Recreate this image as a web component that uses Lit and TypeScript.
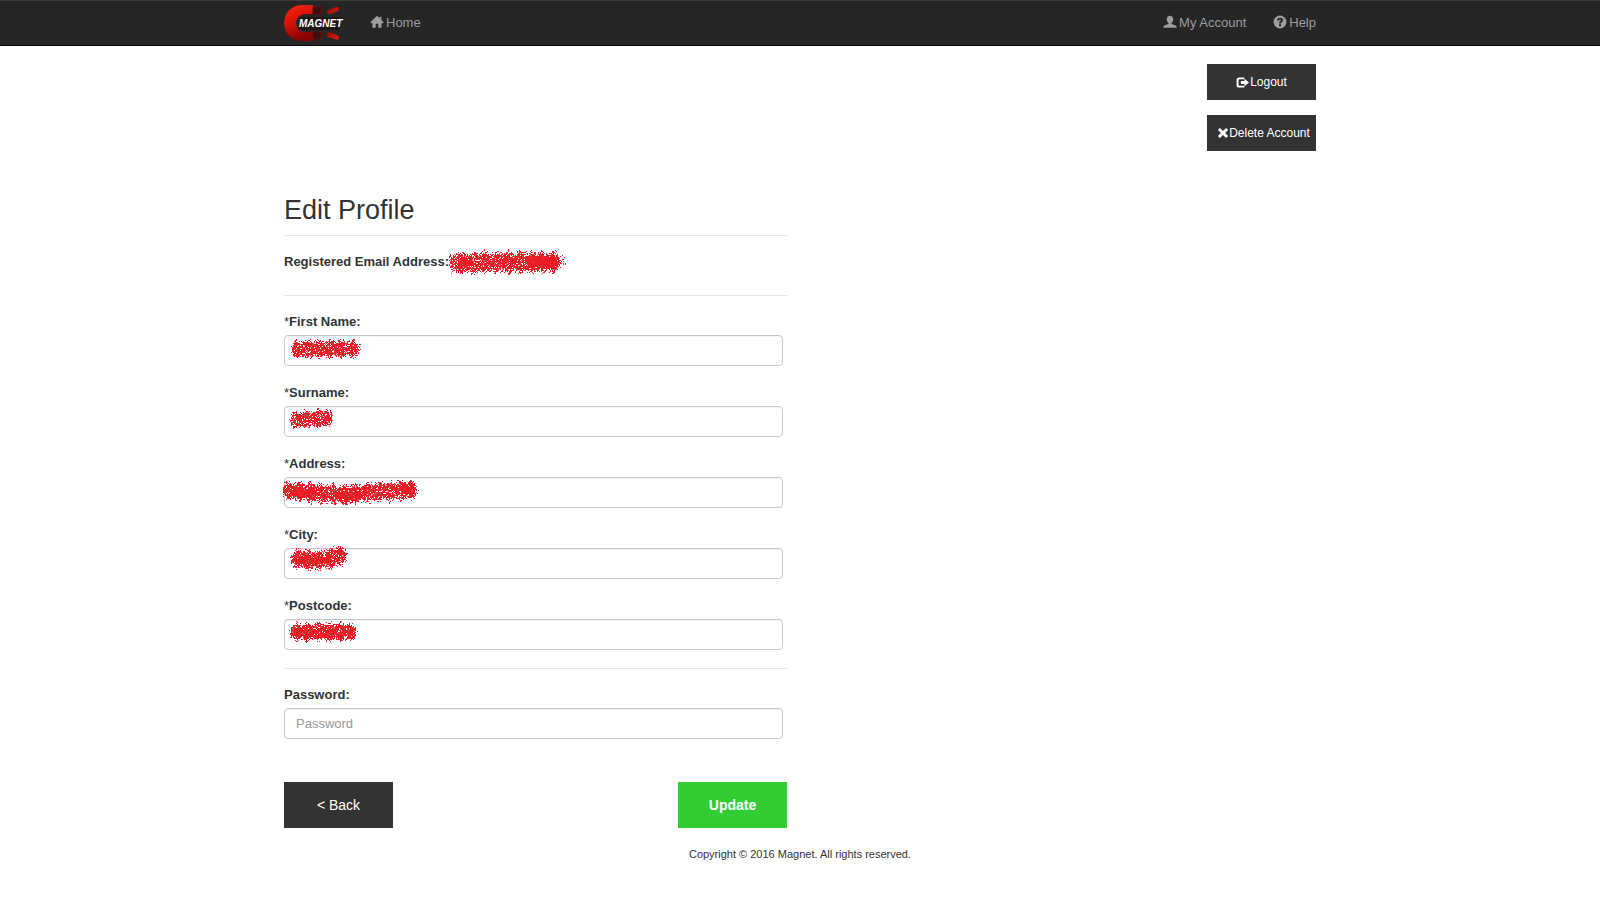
import { LitElement, html, css, svg } from "lit";
import { customElement, property } from "lit/decorators.js";

type Stroke = { points: [number, number][]; radius: number; density: number };

function randomSource(seed: number) {
  let s = seed;
  return () => {
    s = (s * 1664525 + 1013904223) >>> 0;
    return s / 4294967296;
  };
}

function segmentDistance(px: number, py: number, a: [number, number], b: [number, number]) {
  const dx = b[0] - a[0];
  const dy = b[1] - a[1];
  const len = dx * dx + dy * dy || 1;
  const t = Math.max(0, Math.min(1, ((px - a[0]) * dx + (py - a[1]) * dy) / len));
  return Math.hypot(px - a[0] - t * dx, py - a[1] - t * dy);
}

// A spray-brush mark that hides a private value.
@customElement("spray-mark")
export class SprayMark extends LitElement {
  @property({ attribute: false }) strokes: Stroke[] = [];
  @property({ type: Number }) width = 80;
  @property({ type: Number }) height = 24;
  @property({ type: Number }) seed = 1;

  static styles = css`
    :host { display: block; pointer-events: none; }
    svg { display: block; }
  `;

  render() {
    const rnd = randomSource(this.seed);
    let red = "";
    let grey = "";
    for (let y = 0; y < this.height; y++) {
      for (let x = 0; x < this.width; x++) {
        let p = 0;
        for (const s of this.strokes) {
          const radius = s.radius + 1.2 * Math.sin(x * 0.55 + this.seed) + 0.8 * Math.sin(x * 1.3 + y);
          for (let i = 0; i < s.points.length - 1; i++) {
            const d = segmentDistance(x + 0.5, y + 0.5, s.points[i], s.points[i + 1]) / radius;
            const q = d < 0.6 ? s.density : d < 1.05 ? s.density * (1 - (d - 0.6) / 0.5) : 0;
            p = Math.max(p, q);
          }
        }
        const r = rnd();
        if (r < p) red += `M${x} ${y}h1v1h-1z`;
        else if (p > 0.6 && r < p + 0.08) grey += `M${x} ${y}h1v1h-1z`;
      }
    }
    return html`<svg width=${this.width} height=${this.height} shape-rendering="crispEdges" aria-hidden="true">
      <path d=${red} fill="#ed1c24"></path>
      <path d=${grey} fill="#b0686b"></path>
    </svg>`;
  }
}

const homeIcon = svg`<path d="M8 .8.4 8.400l.9.9h1.500v5.300h3.700V10h3v4.600h3.700V9.300h1.500l.9-.9L13 5.800V2h-2v1.800z"/>`;
const userIcon = svg`<path d="M8 .8c-2.200 0-3.700 1.600-3.700 4 0 1.800.8 3.300 1.900 4.200.3.300.2 1.100-.3 1.300L1.700 12C.9 12.300.5 12.900.5 13.700v.9h15v-.9c0-.8-.4-1.400-1.200-1.700l-4.200-1.700c-.5-.2-.6-1-.3-1.300 1.100-.9 1.900-2.400 1.900-4.200 0-2.400-1.500-4-3.700-4z"/>`;
const helpIcon = svg`<path fill-rule="evenodd" d="M8 .6a7.400 7.400 0 1 0 0 14.800A7.400 7.400 0 0 0 8 .6zM6.900 10.700h2.300v2.200H6.900zM8.100 3.100c2 0 3.400 1 3.400 2.700 0 1.300-.7 1.900-1.400 2.400-.6.400-.9.700-.9 1.500H6.900c0-1.500.6-2.100 1.300-2.600.5-.4.900-.6.900-1.200 0-.5-.4-.8-1-.8-.8 0-1.200.5-1.200 1.200H4.600c.1-2 1.500-3.200 3.500-3.200z"/>`;
const logoutIcon = svg`<path d="M10.300 1.700H4A3.300 3.300 0 0 0 .7 5v6A3.300 3.300 0 0 0 4 14.300h6.300V12H4.400a1.300 1.300 0 0 1-1.300-1.300V5.300A1.300 1.300 0 0 1 4.400 4h5.900z"/><path d="M10.400 3.300v3H6v3.400h4.400v3L16 8z"/>`;
const removeIcon = svg`<path d="M3.900 1.200 8 5.200l4.100-4 2.700 2.700L10.800 8l4 4.100-2.700 2.700L8 10.800l-4.100 4-2.700-2.700L5.200 8l-4-4.100z"/>`;

const icon = (shape: unknown) =>
  html`<svg class="icon" viewBox="0 0 16 16" aria-hidden="true">${shape}</svg>`;

const logo = html`<svg class="logo" width="60" height="38" viewBox="0 0 60 38" role="img" aria-label="Magnet">
  <defs>
    <linearGradient id="body" x1="0" y1="0" x2="0.4" y2="1">
      <stop offset="0" stop-color="#f82c12"></stop>
      <stop offset=".45" stop-color="#dc1408"></stop>
      <stop offset="1" stop-color="#860403"></stop>
    </linearGradient>
    <linearGradient id="tip" x1="0" y1="0" x2="1" y2="1">
      <stop offset="0" stop-color="#8e0a05"></stop>
      <stop offset="1" stop-color="#e0200f"></stop>
    </linearGradient>
  </defs>
  <path d="M29 1H18a18 18 0 0 0 0 36h11v-9H21a9 9 0 0 1 0-18h8z" fill="url(#body)"></path>
  <path d="M29 3h8v7h-8zM29 28h8v7h-8z" fill="#3a1110" stroke="#6b0c0a"></path>
  <path d="M43 6.500 52 3q3-.5 3 1.500T53 7.500L46 10q-3 .5-3-3.500z" fill="url(#tip)"></path>
  <path d="M43 30q0-3 3-2l7 3q2 1 2 3t-3 1.500L44 33q-1-.5-1-3z" fill="url(#tip)"></path>
  <path d="M17 13h41l-3 13H14z" fill="#1c1010" opacity=".7"></path>
  <text x="15" y="23" class="logo-text">MAGNET</text>
</svg>`;

const line = (x1: number, y1: number, x2: number, y2: number, radius: number, density = 0.82): Stroke => ({
  points: [[x1, y1], [x2, y2]], radius, density,
});

const fields = [
  { id: "first", label: "First Name:", name: "given-name", mark: { x: 6, y: 4, w: 74, h: 20, strokes: [line(9, 10, 63, 10, 9, 0.8)] } },
  { id: "surname", label: "Surname:", name: "family-name", mark: { x: 4, y: 2, w: 48, h: 21, strokes: [line(9, 12, 37, 10, 9, 0.76)] } },
  { id: "address", label: "Address:", name: "street-address", mark: { x: -4, y: 3, w: 142, h: 25, strokes: [
    { points: [[11, 11], [65, 15], [95, 12], [129, 10]], radius: 10, density: 0.78 } as Stroke, line(15, 12, 34, 12, 6, 0.95), line(58, 15, 80, 15, 5, 0.9), line(125, 10, 131, 10, 6, 0.93)] } },
  { id: "city", label: "City:", name: "address-level2", mark: { x: 4, y: -2, w: 62, h: 26, strokes: [
    { points: [[11, 13], [20, 14], [38, 14], [50, 10]], radius: 10, density: 0.8 } as Stroke, line(12, 15, 40, 14, 5, 0.96)] } },
  { id: "postcode", label: "Postcode:", name: "postal-code", mark: { x: 2, y: 2, w: 76, h: 22, strokes: [line(11, 11, 63, 11, 9, 0.84), line(12, 12, 26, 12, 5, 0.94)] } },
];

@customElement("app-root")
export class AppRoot extends LitElement {
  static styles = css`
    :host {
      display: block;
      min-height: 100vh;
      background: #fff;
      color: #333;
      font: 13px/18px "Liberation Sans", Arial, sans-serif;
    }
    * { box-sizing: border-box; }
    .container { max-width: 1064px; margin: 0 auto; padding: 0 16px; }
    .navbar { background: #262626; border-top: 1px solid #3a3a3a; border-bottom: 1px solid #080808; }
    .nav { display: flex; align-items: center; height: 44px; }
    .brand { display: block; }
    .logo { display: block; overflow: visible; }
    .logo-text { font: italic bold 10px "Liberation Sans", Arial, sans-serif; fill: #fff; }
    .nav a { color: #9d9d9d; text-decoration: none; }
    .link { display: flex; align-items: center; gap: 2px; }
    .home { margin-left: 26px; }
    .account { margin-left: auto; }
    .help { margin-left: 27px; }
    .icon { width: 14px; height: 14px; fill: currentColor; flex: none; }
    .link .icon { margin-bottom: 3px; }
    .actions { display: flex; flex-direction: column; align-items: flex-end; gap: 15px; padding-top: 18px; }
    button {
      width: 109px;
      border: 0;
      padding: 0;
      color: #fff;
      background: #333;
      font: 12px/18px "Liberation Sans", Arial, sans-serif;
      cursor: pointer;
    }
    .small {
      height: 36px;
      display: flex;
      align-items: center;
      justify-content: center;
      gap: 1px;
      white-space: nowrap;
    }
    .delete { padding-left: 4px; gap: 0; }
    .small .icon { width: 13px; height: 13px; }
    .delete .icon { width: 12px; height: 12px; }
    .profile { max-width: 503px; margin-top: 44px; }
    h1 { font-size: 27px; line-height: 30px; font-weight: 400; margin: 0 0 10px; }
    hr { border: 0; border-top: 1px solid #e5e5e5; margin: 0 0 17px; }
    .email { display: flex; align-items: center; height: 18px; margin-bottom: 24px; font-weight: 700; }
    .fields { display: grid; gap: 18px; margin-bottom: 18px; }
    .field { display: grid; gap: 4px; padding-right: 4px; }
    label { font-weight: 700; }
    .star { font-weight: 400; }
    .box { position: relative; }
    .mark { position: absolute; }
    input {
      display: block;
      width: 100%;
      height: 31px;
      padding: 0 11px;
      border: 1px solid #c8c8c8;
      border-radius: 4px;
      background: #fff;
      color: #555;
      font: inherit;
      box-shadow: inset 0 1px 1px rgba(0, 0, 0, 0.05);
    }
    input::placeholder { color: #999; opacity: 1; }
    .submit { display: flex; justify-content: space-between; margin-top: 43px; }
    .submit button { height: 46px; font-size: 14px; }
    .submit .update { background: #3c3; font-weight: 700; }
    .footer { padding-top: 17px; text-align: center; font-size: 11px; }
  `;

  render() {
    return html`
      <header class="navbar">
        <nav class="container nav">
          <a class="brand" href="#">${logo}</a>
          <a class="link home" href="#home">${icon(homeIcon)}<span>Home</span></a>
          <a class="link account" href="#account">${icon(userIcon)}<span>My Account</span></a>
          <a class="link help" href="#help">${icon(helpIcon)}<span>Help</span></a>
        </nav>
      </header>
      <main class="container">
        <div class="actions">
          <button class="small" type="button">${icon(logoutIcon)}<span>Logout</span></button>
          <button class="small delete" type="button">${icon(removeIcon)}<span>Delete Account</span></button>
        </div>
        <form class="profile" @submit=${(e: Event) => e.preventDefault()}>
          <h1>Edit Profile</h1>
          <hr />
          <div class="email">
            <span>Registered Email Address:</span>
            <spray-mark .width=${118} .height=${26} .seed=${7}
              .strokes=${[line(10, 14, 104, 13, 11, 0.76), line(82, 12, 102, 13, 8, 0.99), line(12, 14, 20, 14, 6, 0.9)]}></spray-mark>
          </div>
          <hr />
          <div class="fields">
            ${fields.map((f, i) => html`
              <div class="field">
                <label for=${f.id}><span class="star">*</span>${f.label}</label>
                <div class="box">
                  <input id=${f.id} type="text" autocomplete=${f.name} />
                  <spray-mark class="mark" style="left:${f.mark.x}px;top:${f.mark.y}px"
                    .width=${f.mark.w} .height=${f.mark.h} .seed=${i * 31 + 11} .strokes=${f.mark.strokes}></spray-mark>
                </div>
              </div>`)}
          </div>
          <hr />
          <div class="field">
            <label for="password">Password:</label>
            <input id="password" type="password" placeholder="Password" autocomplete="current-password" />
          </div>
          <div class="submit">
            <button type="button">&lt; Back</button>
            <button class="update" type="submit">Update</button>
          </div>
        </form>
      </main>
      <footer class="container footer">Copyright © 2016 Magnet. All rights reserved.</footer>
    `;
  }
}
